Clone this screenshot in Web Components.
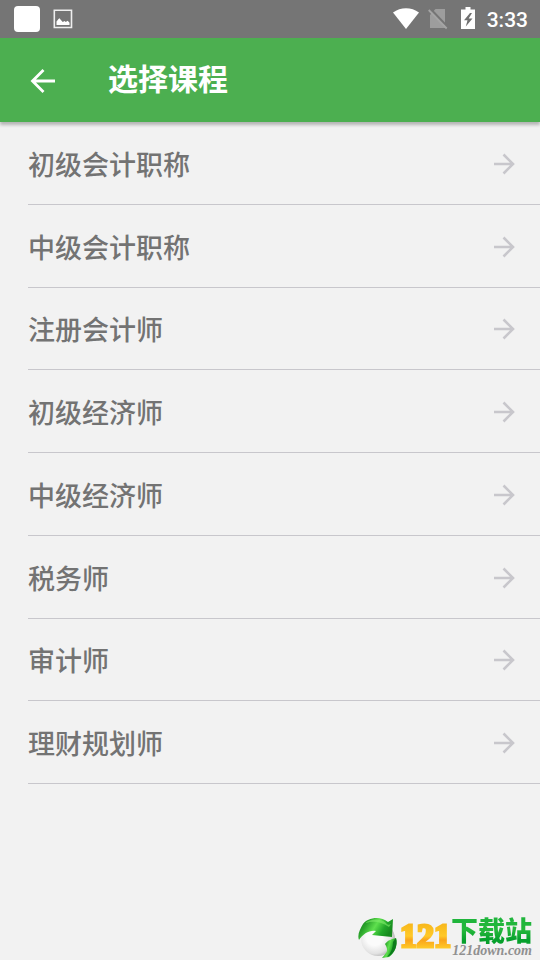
<!DOCTYPE html>
<html lang="zh-CN">
<head>
<meta charset="utf-8">
<meta name="viewport" content="width=device-width, initial-scale=1">
<title>选择课程</title>
<style>
  body { margin: 0; background: #f2f2f2; font-family: "Noto Sans CJK SC", "Noto Sans", sans-serif; }
</style>
</head>
<body>
<course-page>
  <status-bar slot="status">3:33</status-bar>
  <app-header slot="header">选择课程</app-header>
  <course-list>
    <course-row>初级会计职称</course-row>
    <course-row>中级会计职称</course-row>
    <course-row>注册会计师</course-row>
    <course-row>初级经济师</course-row>
    <course-row>中级经济师</course-row>
    <course-row>税务师</course-row>
    <course-row>审计师</course-row>
    <course-row>理财规划师</course-row>
  </course-list>
  <site-brand slot="brand"></site-brand>
</course-page>
<script>
const define = (name, html, role) => customElements.define(name, class extends HTMLElement {
  constructor() {
    super();
    this.attachShadow({ mode: 'open' }).innerHTML = html;
  }
  connectedCallback() { if (role) this.setAttribute('role', role); }
});

define('status-bar', `
<style>
  :host { display: flex; align-items: center; justify-content: space-between; height: 38px; padding: 0 12px 0 14px;
    background: #757575; color: #fff; font: 500 21px/38px Roboto, sans-serif; }
  div { display: flex; align-items: center; }
  .left { gap: 13px; }
  svg { display: block; }
  .app { width: 26px; height: 26px; border-radius: 4px; background: #fff; }
  .wifi { margin-right: 9px; }
  .sim { margin-right: 13px; }
  .battery { margin-right: 12px; }
  .time { padding-top: 2px; line-height: 36px; }
</style>
<div class="left">
  <span class="app"></span>
  <svg width="20" height="20" viewBox="0 0 20 20"><path d="M1.300 1.300h17.200v17.200H1.300z" fill="none" stroke="#eee" stroke-width="1.600"/><path d="M3.500 16v-3.500l2-2.500 1-.8 1.200 1.500 2 2.200 2-1 1 1.100 2-1.200 1.800 2V16z" fill="#fff"/></svg>
</div>
<div>
  <svg class="wifi" width="26" height="22" viewBox="0 0 26 22"><path d="M0 4.500C7.500-1.200 18.500-1.200 26 4.500L13 21z" fill="#fff"/></svg>
  <svg class="sim" width="20" height="22" viewBox="0 0 20 22"><path d="M7.500 1H17v19H2V7z" fill="#9d9d9d"/><path d="M2.500 1l18 19" stroke="#757575" stroke-width="2.500"/><path d="M.7 2l18 18.500" stroke="#a5a5a5" stroke-width="1.800"/></svg>
  <svg class="battery" width="14" height="24" viewBox="0 0 14 24"><path d="M4.500 0h5v2.500H14V22H0V2.500h4.500z" fill="#fff"/><path d="M9 6L3 13.300h3.500L4.800 19.500 11.500 11.500H7.700L11 6z" fill="#707070"/></svg>
  <span class="time"><slot></slot></span>
</div>`);

define('app-header', `
<style>
  :host { display: flex; align-items: center; height: 84px; padding: 0 28px; gap: 50px;
    background: #4caf50; color: #fff; box-shadow: 0 3px 3px rgba(0,0,0,.25); }
  button { all: unset; display: block; width: 30px; height: 30px; cursor: pointer; }
  svg { display: block; }
  h1 { margin: 0; padding-bottom: 6px; font-size: 30px; line-height: 78px; font-weight: 700; }
</style>
<button type="button" aria-label="返回"><svg width="30" height="34" viewBox="0 0 30 34"><path d="M27 16H5M15.500 5L4.500 16l11 11" fill="none" stroke="#fff" stroke-width="2.800"/></svg></button>
<h1><slot></slot></h1>`);

define('course-list', `
<style>
  :host { display: grid; grid-auto-rows: 1fr; min-height: 662px; padding-left: 28px; }
</style>
<slot></slot>`, 'list');

define('course-row', `
<style>
  :host { display: flex; border-bottom: 1px solid #c8c7cc; }
  a { flex: 1; display: flex; align-items: center; justify-content: space-between; padding: 2px 25px 0 0;
    color: #737373; text-decoration: none; font-size: 27px; font-weight: 500; line-height: 40px; }
  svg { display: block; }
</style>
<a href="#"><span><slot></slot></span>
<svg width="22" height="22" viewBox="0 0 22 22" aria-hidden="true"><path d="M1 11h19M10.500 1.500L20 11l-9.500 9.500" fill="none" stroke="#c8c7cc" stroke-width="2.600"/></svg></a>`, 'listitem');

define('site-brand', `
<style>
  :host { display: flex; justify-content: flex-end; align-items: flex-start; padding: 0 8px 2px 0; }
  svg { display: block; }
  .num { font: 700 34px/40px "Liberation Serif", serif; -webkit-text-stroke: 3px transparent;
    color: transparent; background: linear-gradient(#f8b81c 20%, #ffc928 50%, #faa41a 60%, #ffd22c 85%); background-clip: text; }
  .words { display: grid; justify-items: end; }
  .cn { font-size: 27px; line-height: 28px; font-weight: 900; color: transparent;
    background: linear-gradient(#20b53c 20%, #25b83c 50%, #07a02c 85%); background-clip: text; }
  .url { font: italic 700 14px/14px "Liberation Serif", serif; color: #909090; }
</style>
<svg width="42" height="42" viewBox="0 0 42 42" aria-hidden="true">
  <defs>
    <radialGradient id="ball" cx=".4" cy=".45" r=".6"><stop offset=".4" stop-color="#fbfbfb"/><stop offset=".8" stop-color="#e2e2e2"/><stop offset="1" stop-color="#b5b5b5"/></radialGradient>
    <linearGradient id="leaf" x2="1" y2=".4"><stop stop-color="#0f7418"/><stop offset=".3" stop-color="#2ca52c"/><stop offset=".55" stop-color="#5fe04e"/><stop offset=".8" stop-color="#22a72a"/><stop offset="1" stop-color="#178a1f"/></linearGradient>
  </defs>
  <circle cx="20" cy="23" r="17" fill="url(#ball)"/>
  <path d="M1 24C-1 19 2 13 5 8 9 2 22-1 30 6l5-3-1 18-20-2 4-4C11 14 5 18 1 24z" fill="url(#leaf)"/>
  <path d="M7 7c6-4 15-5 21 0 1 2 3 2 5 1l-2 3C22 5 15 5 7 7z" fill="#82ec6d" opacity=".6"/>
  <path d="M27 28c3-4 7-5 11-6 2 7-1 15-7 19l-7 1 4-5c2-2 1-6-1-9z" fill="url(#leaf)"/>
  <path d="M38 22l-3 4c0 6-2 11-6 15 7-3 11-11 9-19z" fill="#0b7c1b"/>
</svg>
<span class="num">121</span>
<div class="words"><span class="cn">下载站</span><span class="url">121down.com</span></div>`);

define('course-page', `
<style>
  :host { display: flex; flex-direction: column; min-height: 100vh; }
  main { flex: 1; }
</style>
<slot name="status"></slot>
<slot name="header"></slot>
<main><slot></slot></main>
<slot name="brand"></slot>`);
</script>
</body>
</html>
